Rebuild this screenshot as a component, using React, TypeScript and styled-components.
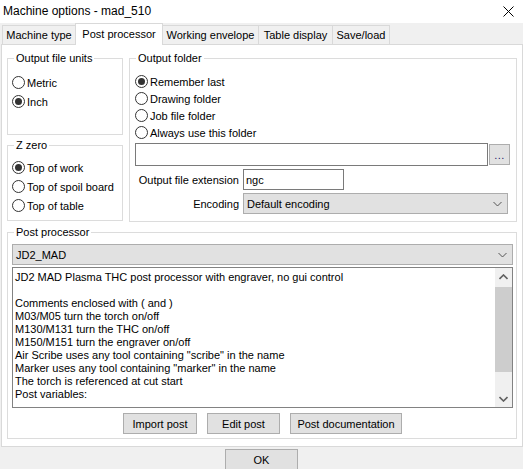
import styled, { createGlobalStyle } from 'styled-components';

const GlobalStyle = createGlobalStyle`
    * {
        box-sizing: border-box;
    }
    body {
        margin: 0;
        background: #f0f0f0;
        font-family: "Liberation Sans", Arial, sans-serif;
        font-size: 11px;
        color: #000;
    }
`;

const Window = styled.div`
    width: 523px;
    height: 469px;
    overflow: hidden;
    display: flex;
    flex-direction: column;
    background: #f0f0f0;
`;

const TitleBar = styled.div`
    height: 23px;
    flex: none;
    background: #fff;
    display: flex;
    align-items: center;
    justify-content: space-between;
    padding: 0 9px 1px 3px;
    font-size: 12px;
`;

const Body = styled.div`
    flex: 1;
    display: flex;
    flex-direction: column;
    padding-left: 1px;
`;

const TabStrip = styled.div`
    height: 21px;
    display: flex;
    align-items: flex-end;
    padding-left: 1px;
    position: relative;
    z-index: 1;
`;

const Tab = styled.div<{ $active?: boolean; $w: number }>`
    width: ${(p) => p.$w}px;
    height: ${(p) => (p.$active ? 22 : 19)}px;
    margin-left: -1px;
    margin-bottom: ${(p) => (p.$active ? -1 : 0)}px;
    border: 1px solid #d9d9d9;
    border-bottom: none;
    background: ${(p) => (p.$active ? '#fff' : '#f0f0f0')};
    display: flex;
    align-items: center;
    justify-content: center;
    padding-bottom: ${(p) => (p.$active ? 2 : 0)}px;
    white-space: nowrap;
    &:first-child {
        margin-left: 0;
    }
`;

const Panel = styled.div`
    width: 522px;
    height: 403px;
    border: 1px solid #d9d9d9;
    background: #fff;
    padding: 13px 5px 7px 5px;
    display: flex;
    flex-direction: column;
    gap: 10px;
`;

const TopRow = styled.div`
    display: grid;
    grid-template-columns: 116px 1fr;
    gap: 6px;
    height: 164px;
    align-items: start;
`;

const LeftColumn = styled.div`
    display: flex;
    flex-direction: column;
    gap: 10px;
`;

const Group = styled.div<{ $h: number }>`
    position: relative;
    height: ${(p) => p.$h}px;
    border: 1px solid #dcdcdc;
    display: flex;
    flex-direction: column;
`;

const Caption = styled.span<{ $left?: number }>`
    position: absolute;
    top: -7px;
    left: ${(p) => p.$left ?? 6}px;
    padding: 0 2px;
    background: #fff;
    line-height: 13px;
`;

const RadioList = styled.div<{ $top: number; $row: number }>`
    display: flex;
    flex-direction: column;
    padding: ${(p) => p.$top}px 0 0 4px;
    & > label {
        height: ${(p) => p.$row}px;
    }
`;

const RadioRow = styled.label`
    display: flex;
    align-items: center;
    gap: 2px;
    white-space: nowrap;
`;

const RadioCircle = styled.span<{ $on?: boolean }>`
    width: 13px;
    height: 13px;
    flex: none;
    border-radius: 50%;
    border: 1px solid #333;
    background: #fff;
    display: flex;
    align-items: center;
    justify-content: center;
    &::after {
        content: '';
        width: 7px;
        height: 7px;
        border-radius: 50%;
        background: ${(p) => (p.$on ? '#333' : 'transparent')};
    }
`;

const FolderBody = styled.div`
    display: flex;
    flex-direction: column;
    padding: 14px 6px 0 5px;
`;

const FolderRadios = styled.div`
    display: flex;
    flex-direction: column;
    & > label {
        height: 17px;
    }
`;

const FieldRow = styled.div`
    display: flex;
    align-items: center;
    margin-top: 2px;
    height: 23px;
`;

const TextField = styled.div<{ $w?: number }>`
    ${(p) => (p.$w ? `width: ${p.$w}px;` : 'flex: 1;')}
    height: 100%;
    border: 1px solid #7a7a7a;
    background: #fff;
    padding: 0 2px;
    display: flex;
    align-items: center;
`;

const DotsButton = styled.div`
    width: 21px;
    height: 21px;
    margin-left: 1px;
    border: 1px solid #adadad;
    background: #e1e1e1;
    display: flex;
    align-items: flex-end;
    justify-content: center;
    padding-bottom: 5px;
    color: #1a1a6a;
    font-size: 11px;
    line-height: 8px;
    letter-spacing: 0.5px;
`;

const FormGrid = styled.div`
    display: grid;
    grid-template-columns: 104px auto;
    column-gap: 4px;
    row-gap: 3px;
    margin-top: 3px;
    align-items: center;
`;

const FormLabel = styled.span`
    text-align: right;
    white-space: nowrap;
`;

const InputBox = styled(TextField)`
    height: 21px;
`;

const Select = styled.div<{ $w?: number }>`
    ${(p) => (p.$w ? `width: ${p.$w}px;` : '')}
    height: 21px;
    flex: none;
    border: 1px solid #adadad;
    background: #e1e1e1;
    display: flex;
    align-items: center;
    justify-content: space-between;
    padding: 0 5px 0 3px;
`;

const PostBody = styled.div`
    display: flex;
    flex-direction: column;
    padding: 11px 3px 4px 4px;
    height: 100%;
`;

const TextArea = styled.div`
    height: 141px;
    margin-top: 2px;
    border: 1px solid #828282;
    background: #fff;
    display: flex;
`;

const TextLines = styled.div`
    flex: 1;
    padding: 3px 0 0 2px;
    line-height: 13px;
    white-space: pre;
    overflow: hidden;
`;

const ScrollBar = styled.div`
    width: 17px;
    background: #f0f0f0;
    display: flex;
    flex-direction: column;
`;

const ScrollArrow = styled.div`
    height: 17px;
    display: flex;
    align-items: center;
    justify-content: center;
`;

const ScrollThumb = styled.div`
    margin-top: 2px;
    height: 85px;
    background: #cdcdcd;
`;

const ScrollTrack = styled.div`
    flex: 1;
`;

const ButtonRow = styled.div`
    display: flex;
    justify-content: center;
    gap: 10px;
    margin-top: 5px;
`;

const Button = styled.div<{ $w: number }>`
    width: ${(p) => p.$w}px;
    height: 21px;
    border: 1px solid #adadad;
    background: #e1e1e1;
    display: flex;
    align-items: center;
    justify-content: center;
    white-space: nowrap;
`;

const Footer = styled.div`
    flex: 1;
    display: flex;
    justify-content: center;
    padding-top: 2px;
    padding-right: 1px;
`;

const OkButton = styled(Button)`
    height: 23px;
    padding-bottom: 2px;
`;

const Chevron = ({ up, color = '#555' }: { up?: boolean; color?: string }) => (
    <svg width="9" height="6" viewBox="0 0 9 6">
        <polyline
            points={up ? '0.5,5 4.5,1 8.5,5' : '0.5,1 4.5,5 8.5,1'}
            fill="none"
            stroke={color}
            strokeWidth={up || color !== '#555' ? 1.6 : 1}
        />
    </svg>
);

const CloseIcon = () => (
    <svg width="11" height="11" viewBox="0 0 11 11">
        <path d="M0.5 0.5 L10.5 10.5 M10.5 0.5 L0.5 10.5" stroke="#000" strokeWidth="1" />
    </svg>
);

const Radio = ({ label, on }: { label: string; on?: boolean }) => (
    <RadioRow>
        <RadioCircle $on={on} />
        {label}
    </RadioRow>
);

const postText = [
    'JD2 MAD Plasma THC post processor with engraver, no gui control',
    '',
    'Comments enclosed with ( and )',
    'M03/M05 turn the torch on/off',
    'M130/M131 turn the THC on/off',
    'M150/M151 turn the engraver on/off',
    'Air Scribe uses any tool containing "scribe" in the name',
    'Marker uses any tool containing "marker" in the name',
    'The torch is referenced at cut start',
    'Post variables:',
].join('\n');

const App = () => {
    return (
        <Window>
            <GlobalStyle />
            <TitleBar>
                <span>Machine options - mad_510</span>
                <CloseIcon />
            </TitleBar>
            <Body>
                <TabStrip>
                    <Tab $w={74}>Machine type</Tab>
                    <Tab $w={88} $active>
                        Post processor
                    </Tab>
                    <Tab $w={97}>Working envelope</Tab>
                    <Tab $w={75}>Table display</Tab>
                    <Tab $w={58}>Save/load</Tab>
                </TabStrip>
                <Panel>
                    <TopRow>
                        <LeftColumn>
                            <Group $h={77}>
                                <Caption>Output file units</Caption>
                                <RadioList $top={14} $row={19}>
                                    <Radio label="Metric" />
                                    <Radio label="Inch" on />
                                </RadioList>
                            </Group>
                            <Group $h={76}>
                                <Caption>Z zero</Caption>
                                <RadioList $top={12} $row={19}>
                                    <Radio label="Top of work" on />
                                    <Radio label="Top of spoil board" />
                                    <Radio label="Top of table" />
                                </RadioList>
                            </Group>
                        </LeftColumn>
                        <Group $h={164}>
                            <Caption>Output folder</Caption>
                            <FolderBody>
                                <FolderRadios>
                                    <Radio label="Remember last" on />
                                    <Radio label="Drawing folder" />
                                    <Radio label="Job file folder" />
                                    <Radio label="Always use this folder" />
                                </FolderRadios>
                                <FieldRow>
                                    <TextField />
                                    <DotsButton>...</DotsButton>
                                </FieldRow>
                                <FormGrid>
                                    <FormLabel>Output file extension</FormLabel>
                                    <InputBox $w={101}>ngc</InputBox>
                                    <FormLabel>Encoding</FormLabel>
                                    <Select $w={265}>
                                        <span>Default encoding</span>
                                        <Chevron />
                                    </Select>
                                </FormGrid>
                            </FolderBody>
                        </Group>
                    </TopRow>
                    <Group $h={207}>
                        <Caption>Post processor</Caption>
                        <PostBody>
                            <Select>
                                <span>JD2_MAD</span>
                                <Chevron />
                            </Select>
                            <TextArea>
                                <TextLines>{postText}</TextLines>
                                <ScrollBar>
                                    <ScrollArrow>
                                        <Chevron up color="#606060" />
                                    </ScrollArrow>
                                    <ScrollThumb />
                                    <ScrollTrack />
                                    <ScrollArrow>
                                        <Chevron color="#606060" />
                                    </ScrollArrow>
                                </ScrollBar>
                            </TextArea>
                            <ButtonRow>
                                <Button $w={74}>Import post</Button>
                                <Button $w={73}>Edit post</Button>
                                <Button $w={112}>Post documentation</Button>
                            </ButtonRow>
                        </PostBody>
                    </Group>
                </Panel>
                <Footer>
                    <OkButton $w={73}>OK</OkButton>
                </Footer>
            </Body>
        </Window>
    );
};

export default App;
